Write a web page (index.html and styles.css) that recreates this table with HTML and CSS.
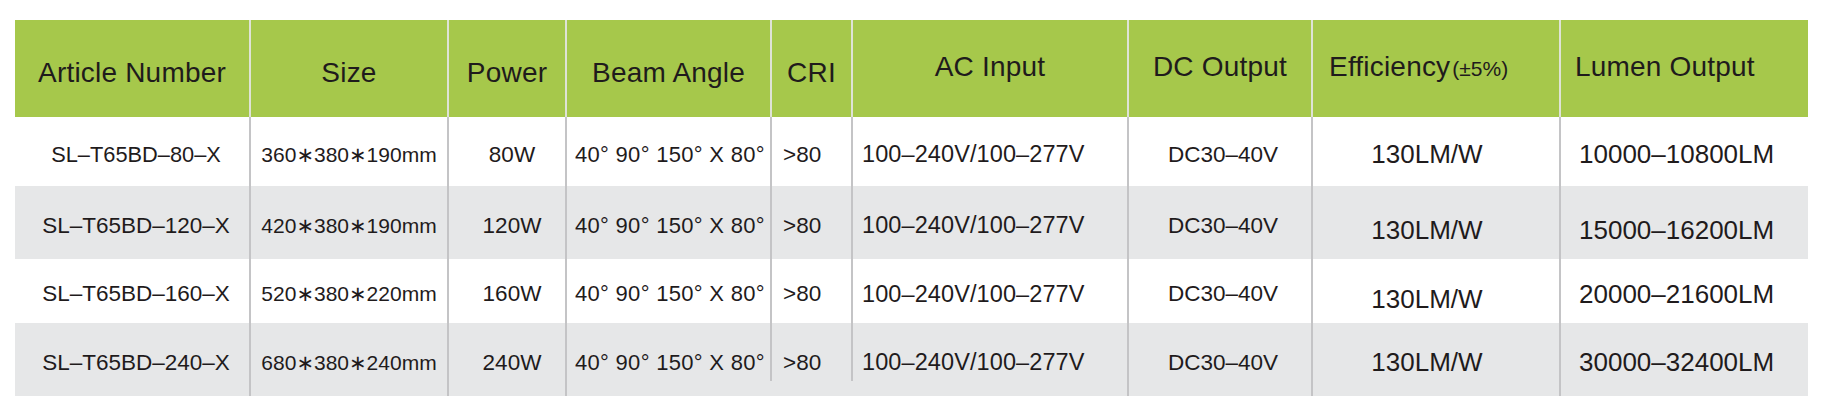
FILE: index.html
```html
<!DOCTYPE html>
<html lang="en">
<head>
<meta charset="utf-8">
<title>Specifications</title>
<link rel="stylesheet" href="styles.css">
</head>
<body>
<div class="sheet">
  <div class="spec">
    <div class="row head">
      <div class="cell">Article Number</div>
      <div class="cell">Size</div>
      <div class="cell">Power</div>
      <div class="cell">Beam Angle</div>
      <div class="cell">CRI</div>
      <div class="cell hi">AC Input</div>
      <div class="cell hi">DC Output</div>
      <div class="cell hi h-eff">Efficiency<span class="tol">(±5%)</span></div>
      <div class="cell hi h-lum">Lumen Output</div>
    </div>
    <div class="row r1">
      <div class="cell c1 sm">SL–T65BD–80–X</div>
      <div class="cell c2">360∗380∗190mm</div>
      <div class="cell c3">80W</div>
      <div class="cell c4">40° 90° 150° X 80°</div>
      <div class="cell c5">&gt;80</div>
      <div class="cell c6">100–240V/100–277V</div>
      <div class="cell c7">DC30–40V</div>
      <div class="cell c8">130LM/W</div>
      <div class="cell c9">10000–10800LM</div>
    </div>
    <div class="row r2 alt">
      <div class="cell c1">SL–T65BD–120–X</div>
      <div class="cell c2">420∗380∗190mm</div>
      <div class="cell c3">120W</div>
      <div class="cell c4">40° 90° 150° X 80°</div>
      <div class="cell c5">&gt;80</div>
      <div class="cell c6">100–240V/100–277V</div>
      <div class="cell c7">DC30–40V</div>
      <div class="cell c8 lo">130LM/W</div>
      <div class="cell c9 lo">15000–16200LM</div>
    </div>
    <div class="row r3">
      <div class="cell c1">SL–T65BD–160–X</div>
      <div class="cell c2">520∗380∗220mm</div>
      <div class="cell c3">160W</div>
      <div class="cell c4">40° 90° 150° X 80°</div>
      <div class="cell c5">&gt;80</div>
      <div class="cell c6">100–240V/100–277V</div>
      <div class="cell c7">DC30–40V</div>
      <div class="cell c8 lo">130LM/W</div>
      <div class="cell c9">20000–21600LM</div>
    </div>
    <div class="row r4 alt">
      <div class="cell c1">SL–T65BD–240–X</div>
      <div class="cell c2">680∗380∗240mm</div>
      <div class="cell c3">240W</div>
      <div class="cell c4">40° 90° 150° X 80°</div>
      <div class="cell c5 short">&gt;80</div>
      <div class="cell c6 short">100–240V/100–277V</div>
      <div class="cell c7">DC30–40V</div>
      <div class="cell c8">130LM/W</div>
      <div class="cell c9">30000–32400LM</div>
    </div>
  </div>
</div>
</body>
</html>
```

FILE: styles.css
```css
html, body {
  margin: 0;
  background: #ffffff;
}

body {
  font-family: "Liberation Sans", Arial, "DejaVu Sans", sans-serif;
  color: #1f1b1c;
}

.sheet {
  padding: 20px 0 0 15px;
}

.spec {
  width: 1793px;
}

.row {
  display: grid;
  grid-template-columns: 234px 198px 118px 205px 81px 276px 184px 248px 249px;
}

.head {
  height: 97px;
  background: #a6c84b;
}

.r1 { height: 69px; }
.r2 { height: 73px; }
.r3 { height: 64px; }
.r4 { height: 73px; }

.alt {
  background: #e6e7e8;
}

.cell {
  display: flex;
  align-items: center;
  justify-content: center;
  box-sizing: border-box;
  border-left: 2px solid #c4c4c6;
  white-space: nowrap;
  padding-top: 6px;
}

.cell:first-child {
  border-left: 0;
}

/* header */
.head .cell {
  border-left-color: #dfe3d6;
  font-size: 28px;
  letter-spacing: 0.2px;
  padding-top: 8px;
}

.head .cell:first-child {
  border-left: 0;
}

.head .hi {
  padding-top: 0;
  padding-bottom: 4px;
}

.head .h-eff {
  justify-content: flex-start;
  padding-left: 16px;
}

.tol {
  font-size: 21px;
  letter-spacing: 0;
  margin-left: 2px;
  position: relative;
  top: 2px;
}

.head .h-lum {
  justify-content: flex-start;
  padding-left: 14px;
}

/* body columns */
.c1 { font-size: 22.5px; padding-left: 8px; }
.c1.sm { font-size: 21.8px; }
.c2 { font-size: 21px; }
.c3 { font-size: 22.5px; padding-left: 10px; }
.c4 { font-size: 22px; justify-content: flex-start; padding-left: 8px; letter-spacing: 0.3px; }
.c5 { font-size: 22.5px; justify-content: flex-start; padding-left: 11px; }
.c6 { font-size: 23.5px; justify-content: flex-start; padding-left: 9px; letter-spacing: 0.1px; }
.c7 { font-size: 22.5px; padding-left: 6px; }
.c8 { font-size: 26px; padding-right: 18px; }
.c9 { font-size: 26px; justify-content: flex-start; padding-left: 18px; }

.lo {
  padding-top: 16px;
}

.short {
  border-left-color: transparent;
  background: linear-gradient(#c4c4c6, #c4c4c6) left top / 2px calc(100% - 15px) no-repeat;
  background-origin: border-box;
}
```
